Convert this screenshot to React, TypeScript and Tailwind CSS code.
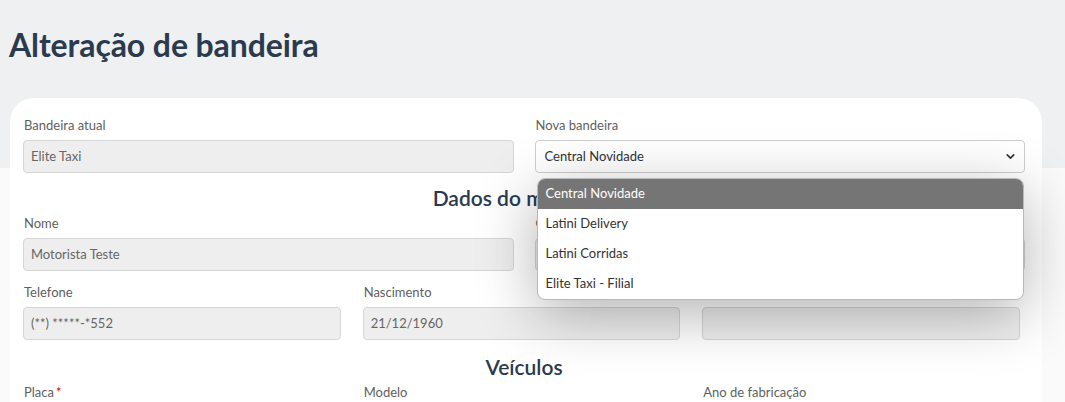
import { ChevronDown } from "lucide-react";

interface FieldProps {
  label: string;
  value?: string;
  required?: boolean;
}

function Field({ label, value, required }: FieldProps) {
  return (
    <div className="flex flex-col">
      <label className="text-[13px] leading-[16px] text-[#5f5f5f] pl-[1px]">
        {label}
        {required && <span className="text-[#e00000] ml-[2px]">*</span>}
      </label>
      <div className="mt-[7px] h-[33px] rounded-[4px] border border-[#d6d6d6] bg-[#eeeeee] px-[7px] flex items-center text-[13px] text-[#666666]">
        {value}
      </div>
    </div>
  );
}

const options = ["Central Novidade", "Latini Delivery", "Latini Corridas", "Elite Taxi - Filial"];

export default function App() {
  return (
    <div className="min-h-screen font-['Lato',sans-serif] bg-[linear-gradient(to_bottom,#eef0f2_168px,#fafafa_168px)] px-[10px] overflow-hidden">
      {/* Page header */}
      <h1 className="pt-[25px] -ml-[1px] text-[32px] leading-[39px] font-bold text-[#2c3a4e] tracking-[-0.1px]">
        Alteração de bandeira
      </h1>

      {/* Card */}
      <div className="mt-[34px] w-[1032px] bg-white rounded-t-[24px] pl-[13px] pr-[17px] pt-[19px] pb-6">
        <div className="grid grid-cols-2 gap-x-[21px]">
          <Field label="Bandeira atual" value="Elite Taxi" />
          <div className="relative flex flex-col">
            <label className="text-[13px] leading-[16px] text-[#5f5f5f] pl-[1px]">Nova bandeira</label>
            <div className="mt-[7px] h-[33px] rounded-[4px] border border-[#cfcfcf] bg-white px-[9px] flex items-center justify-between text-[13px] text-[#333333]">
              <span>Central Novidade</span>
              <ChevronDown size={13} strokeWidth={3} className="text-[#333] -mr-[2px]" />
            </div>

            {/* Open dropdown */}
            <div className="absolute z-10 top-[61px] left-[2px] right-[1px] rounded-[8px] border border-[#b9b9b9] bg-white overflow-hidden shadow-[0_14px_60px_rgba(0,0,0,0.3)]">
              {options.map((o, i) => (
                <div
                  key={o}
                  className={
                    i === 0
                      ? "h-[30px] px-[8px] flex items-center text-[13px] bg-[#757575] text-white"
                      : "h-[30px] px-[8px] flex items-center text-[13px] text-[#333333]"
                  }
                >
                  {o}
                </div>
              ))}
            </div>
          </div>
        </div>

        <h2 className="mt-[8px] text-center text-[21px] leading-[34px] font-semibold text-[#2c3a4e]">
          Dados do motorista
        </h2>

        <div className="mt-[0px] grid grid-cols-2 gap-x-[21px]">
          <Field label="Nome" value="Motorista Teste" />
          <Field label="CPF" value="" />
        </div>

        <div className="mt-[13px] grid grid-cols-3 gap-x-[22px] pr-[5px]">
          <Field label="Telefone" value="(**) *****-*552" />
          <Field label="Nascimento" value="21/12/1960" />
          <Field label="E-mail" value="" />
        </div>

        <h2 className="mt-[10px] text-center text-[21px] leading-[34px] font-semibold text-[#2c3a4e]">
          Veículos
        </h2>

        <div className="grid grid-cols-3 gap-x-[22px] pr-[5px]">
          <Field label="Placa" required />
          <Field label="Modelo" />
          <Field label="Ano de fabricação" />
        </div>
      </div>
    </div>
  );
}
